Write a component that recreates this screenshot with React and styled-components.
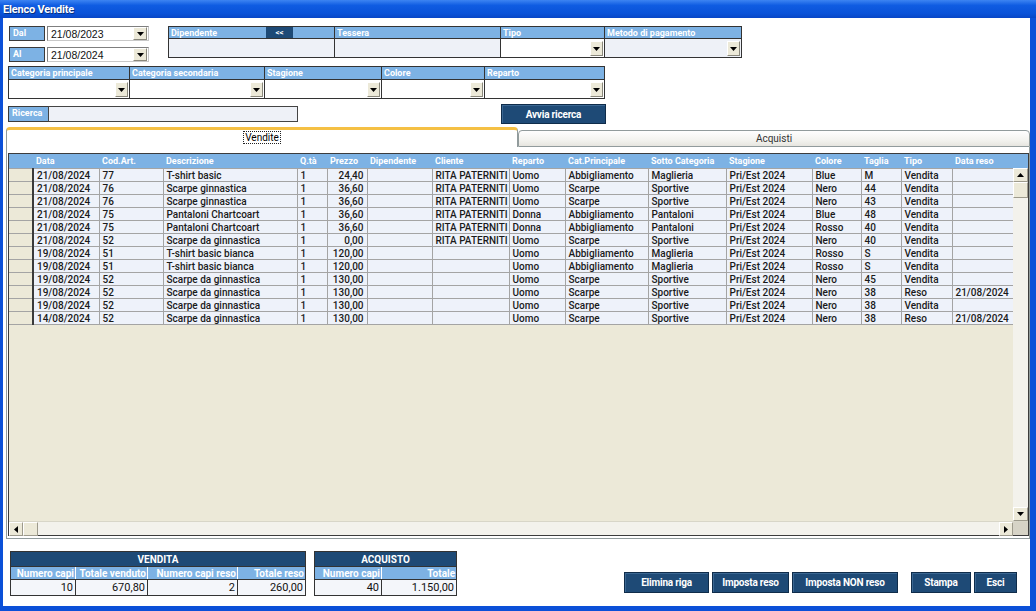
import React from "react"
import styled, { createGlobalStyle } from "styled-components"

const GlobalStyle = createGlobalStyle`
  html, body { margin: 0; padding: 0; background: #fff; }
  body { font-family: Roboto, "Liberation Sans", sans-serif; }
  * { box-sizing: border-box; }
`

const NAVY = "#1e4a76"
const HEAD_BLUE = "#7db2e4"
const BEIGE = "#ece9d8"

const Window = styled.div`
	width: 1036px;
	height: 611px;
	display: flex;
	flex-direction: column;
	background: #0b50d8;
	overflow: hidden;
`
const TitleBar = styled.div`
	height: 18px;
	flex: none;
	display: flex;
	align-items: center;
	padding-left: 3px;
	background: linear-gradient(#3d84f2, #0f5ce2 30%, #0a52d8 75%, #0846c6);
	color: #fff;
	font: bold 11px Roboto, sans-serif;
	letter-spacing: -0.2px;
	text-shadow: 1px 1px 0 #08307e;
`
const Client = styled.div`
	flex: 1;
	margin: 0 6px 5px 3px;
	background: #fff;
	display: flex;
	flex-direction: column;
	padding-top: 8px;
`
const FilterRow = styled.div`
	display: flex;
	align-items: ${({ $align }) => $align || "flex-start"};
	margin-left: ${({ $indent }) => $indent}px;
	margin-top: ${({ $top }) => $top || 0}px;
`
const DateCol = styled.div`
	display: flex;
	flex-direction: column;
	gap: 6px;
	margin-right: 19px;
`
const DateRow = styled.div`
	display: flex;
	gap: 2px;
`
const Label = styled.div`
	width: ${({ $w }) => $w}px;
	height: ${({ $h }) => $h}px;
	background: ${HEAD_BLUE};
	border: 1px solid #3a3a3a;
	color: #fff;
	font: bold 9px Roboto, sans-serif;
	padding: 1px 0 0 3px;
`
const DateInput = styled.div`
	width: 102px;
	height: 15px;
	background: #fff;
	border: 1px solid #7f7f7f;
	border-right-color: #c8c8c8;
	border-bottom-color: #c8c8c8;
	display: flex;
	align-items: center;
	justify-content: space-between;
	padding: 0 1px 0 3px;
	font: 10.5px "Liberation Sans", Arial, sans-serif;
	color: #111;
`
const DropBtn = styled.div`
	width: ${({ $w }) => $w || 13}px;
	height: ${({ $h }) => $h || 12}px;
	background: ${BEIGE};
	border: 1px solid;
	border-color: #fff #8a887c #8a887c #fff;
	display: flex;
	align-items: center;
	justify-content: center;
`
const Groups = styled.div`
	display: flex;
`
const Group = styled.div`
	width: ${({ $w }) => $w}px;
	border: 1px solid #333;
	& + & { margin-left: -1px; }
	display: flex;
	flex-direction: column;
`
const GroupHead = styled.div`
	height: ${({ $h }) => $h}px;
	background: ${HEAD_BLUE};
	border-bottom: 1px solid #333;
	color: #fff;
	font: bold 9px Roboto, sans-serif;
	padding-left: 2px;
	display: flex;
	align-items: center;
	white-space: nowrap;
	overflow: hidden;
`
const HeadLabel = styled.span`
	width: ${({ $w }) => $w}px;
	flex: none;
`
const MiniBtn = styled.div`
	width: 27px;
	height: 100%;
	background: ${NAVY};
	color: #fff;
	font: bold 8px Roboto, sans-serif;
	display: flex;
	align-items: center;
	justify-content: center;
`
const GroupBody = styled.div`
	height: ${({ $h }) => $h}px;
	background: ${({ $light }) => ($light ? "#eef1f7" : "#fff")};
	display: flex;
	align-items: flex-end;
	justify-content: flex-end;
	padding: 1px;
`
const SearchInput = styled.div`
	width: 250px;
	height: 16px;
	margin-left: -1px;
	background: #eef1f7;
	border: 1px solid #444;
`
const NavyButton = styled.button`
	width: ${({ $w }) => $w}px;
	height: ${({ $h }) => $h || 21}px;
	margin-left: ${({ $ml }) => $ml || 0}px;
	margin-right: ${({ $mr }) => $mr || 0}px;
	background: ${NAVY};
	border: 1px solid #0f2c4a;
	box-shadow: inset 1px 1px 0 #3b6792;
	color: #fff;
	font: bold 10px Roboto, sans-serif;
	letter-spacing: -0.2px;
	padding: 0;
	cursor: pointer;
`
const TabStrip = styled.div`
	display: flex;
	align-items: flex-end;
	margin: 3px 0 0 3px;
	height: 20px;
`
const Tab = styled.div`
	height: ${({ $active }) => ($active ? 20 : 17)}px;
	width: ${({ $active }) => ($active ? "512px" : "auto")};
	flex: ${({ $active }) => ($active ? "none" : 1)};
	border: 1px solid #919b9c;
	border-bottom: ${({ $active }) => ($active ? "none" : "1px solid #919b9c")};
	border-top: ${({ $active }) => ($active ? "3px solid #f5c044" : "1px solid #919b9c")};
	border-radius: 4px 4px 0 0;
	background: ${({ $active }) => ($active ? "#fff" : "linear-gradient(#fefefe, #f3f3ef 60%, #e6e5df)")};
	display: flex;
	align-items: center;
	justify-content: center;
	font: 10px Roboto, sans-serif;
	color: ${({ $active }) => ($active ? "#000" : "#333")};
	padding-bottom: ${({ $active }) => ($active ? 3 : 0)}px;
`
const FocusText = styled.span`
	border: 1px dotted #222;
	padding: 0 1px;
	line-height: 11px;
`
const Panel = styled.div`
	height: 392px;
	margin-left: 3px;
	border: 1px solid #919b9c;
	border-top: none;
	padding: 6px 0 2px 1px;
	display: flex;
	flex-direction: column;
`
const GridBox = styled.div`
	flex: 1;
	border: 1px solid #3c3c3c;
	display: flex;
	flex-direction: column;
	background: ${BEIGE};
`
const GridTable = styled.table`
	table-layout: fixed;
	border-collapse: collapse;
	width: ${({ $w }) => $w}px;
`
const HeadCell = styled.th`
	height: 14px;
	line-height: 14px;
	padding: 0 3px;
	background: ${HEAD_BLUE};
	color: #fff;
	font: bold 9px Roboto, sans-serif;
	text-align: left;
	white-space: nowrap;
	overflow: hidden;
`
const Cell = styled.td`
	height: 13px;
	padding: 0 3px;
	background: #eef2fa;
	border: 1px solid #a4a4a4;
	color: #1a1a1a;
	font: 500 10px Roboto, sans-serif;
	line-height: 11px;
	white-space: nowrap;
	overflow: hidden;
	text-align: ${({ $right }) => ($right ? "right" : "left")};
`
const SelCell = styled.td`
	height: 13px;
	padding: 0;
	background: ${BEIGE};
	border: 1px solid #a4a4a4;
	border-left: none;
	border-right: 2px solid #3a3a3a;
`
const GridBody = styled.div`
	flex: 1;
	display: flex;
	min-height: 0;
`
const RowsArea = styled.div`
	flex: 1;
	background: ${BEIGE};
	overflow: hidden;
`
const VScroll = styled.div`
	width: 15px;
	display: flex;
	flex-direction: column;
	background: #f3f2ec;
`
const ScrollTrack = styled.div`
	flex: 1;
`
const ScrollBtn = styled.div`
	width: ${({ $w }) => $w || 15}px;
	height: ${({ $h }) => $h || 14}px;
	flex: none;
	background: ${BEIGE};
	border: 1px solid;
	border-color: #fff #9d9a8c #9d9a8c #fff;
	display: flex;
	align-items: center;
	justify-content: center;
`
const HScroll = styled.div`
	height: 14px;
	display: flex;
	background: #f3f2ec;
	border-top: 1px solid #d8d6c8;
`
const Corner = styled.div`
	width: 15px;
	background: #d6d3c6;
`
const Footer = styled.div`
	flex: 1;
	display: flex;
	align-items: flex-end;
	padding: 0 13px 10px 7px;
`
const Summaries = styled.div`
	display: flex;
	gap: 8px;
`
const SumTable = styled.table`
	border-collapse: collapse;
	table-layout: fixed;
	border: 1px solid #333;
`
const SumTitle = styled.th`
	height: 15px;
	background: ${NAVY};
	color: #fff;
	font: bold 10px Roboto, sans-serif;
	text-align: center;
	padding: 0;
	border-bottom: 1px solid #333;
`
const SumHead = styled.th`
	height: 13px;
	background: ${HEAD_BLUE};
	color: #fff;
	font: bold 10px Roboto, sans-serif;
	text-align: right;
	padding: 0 1px 0 0;
	white-space: nowrap;
	overflow: hidden;
	border-left: 1px solid #fff;
	border-bottom: 1px solid #333;
	&:first-child { border-left: none; }
`
const SumValue = styled.td`
	height: 16px;
	background: #f4f6fa;
	color: #111;
	font: 11px Roboto, sans-serif;
	text-align: right;
	padding: 0 2px 0 0;
	border-left: 1px solid #333;
	&:first-child { border-left: none; }
`
const ActionBar = styled.div`
	margin-left: auto;
	margin-bottom: 3px;
	display: flex;
	gap: 3px;
`

const Tri = ({ dir = "down" }) => {
	const d = {
		down: "M0 0h7L3.5 4z",
		up: "M0 4h7L3.5 0z",
		left: "M4 0v7L0 3.5z",
		right: "M0 0v7l4-3.5z",
	}[dir]
	const horiz = dir === "left" || dir === "right"
	return (
		<svg width={horiz ? 4 : 7} height={horiz ? 7 : 4} viewBox={horiz ? "0 0 4 7" : "0 0 7 4"}>
			<path d={d} fill="#000" />
		</svg>
	)
}

const columns = [
	{ title: "Data", w: 66 },
	{ title: "Cod.Art.", w: 64 },
	{ title: "Descrizione", w: 134 },
	{ title: "Q.tà", w: 30 },
	{ title: "Prezzo", w: 40, right: true },
	{ title: "Dipendente", w: 65 },
	{ title: "Cliente", w: 77 },
	{ title: "Reparto", w: 56 },
	{ title: "Cat.Principale", w: 83 },
	{ title: "Sotto Categoria", w: 78 },
	{ title: "Stagione", w: 86 },
	{ title: "Colore", w: 49 },
	{ title: "Taglia", w: 40 },
	{ title: "Tipo", w: 51 },
	{ title: "Data reso", w: 61 },
]

const rows = [
	["21/08/2024", "77", "T-shirt basic", "1", "24,40", "", "RITA PATERNITI", "Uomo", "Abbigliamento", "Maglieria", "Pri/Est 2024", "Blue", "M", "Vendita", ""],
	["21/08/2024", "76", "Scarpe ginnastica", "1", "36,60", "", "RITA PATERNITI", "Uomo", "Scarpe", "Sportive", "Pri/Est 2024", "Nero", "44", "Vendita", ""],
	["21/08/2024", "76", "Scarpe ginnastica", "1", "36,60", "", "RITA PATERNITI", "Uomo", "Scarpe", "Sportive", "Pri/Est 2024", "Nero", "43", "Vendita", ""],
	["21/08/2024", "75", "Pantaloni Chartcoart", "1", "36,60", "", "RITA PATERNITI", "Donna", "Abbigliamento", "Pantaloni", "Pri/Est 2024", "Blue", "48", "Vendita", ""],
	["21/08/2024", "75", "Pantaloni Chartcoart", "1", "36,60", "", "RITA PATERNITI", "Donna", "Abbigliamento", "Pantaloni", "Pri/Est 2024", "Rosso", "40", "Vendita", ""],
	["21/08/2024", "52", "Scarpe da ginnastica", "1", "0,00", "", "RITA PATERNITI", "Uomo", "Scarpe", "Sportive", "Pri/Est 2024", "Nero", "40", "Vendita", ""],
	["19/08/2024", "51", "T-shirt basic bianca", "1", "120,00", "", "", "Uomo", "Abbigliamento", "Maglieria", "Pri/Est 2024", "Rosso", "S", "Vendita", ""],
	["19/08/2024", "51", "T-shirt basic bianca", "1", "120,00", "", "", "Uomo", "Abbigliamento", "Maglieria", "Pri/Est 2024", "Rosso", "S", "Vendita", ""],
	["19/08/2024", "52", "Scarpe da ginnastica", "1", "130,00", "", "", "Uomo", "Scarpe", "Sportive", "Pri/Est 2024", "Nero", "45", "Vendita", ""],
	["19/08/2024", "52", "Scarpe da ginnastica", "1", "130,00", "", "", "Uomo", "Scarpe", "Sportive", "Pri/Est 2024", "Nero", "38", "Reso", "21/08/2024"],
	["19/08/2024", "52", "Scarpe da ginnastica", "1", "130,00", "", "", "Uomo", "Scarpe", "Sportive", "Pri/Est 2024", "Nero", "38", "Vendita", ""],
	["14/08/2024", "52", "Scarpe da ginnastica", "1", "130,00", "", "", "Uomo", "Scarpe", "Sportive", "Pri/Est 2024", "Nero", "38", "Reso", "21/08/2024"],
]

const topGroups = [
	{ title: "Dipendente", w: 167, light: true, back: true },
	{ title: "Tessera", w: 167, light: true },
	{ title: "Tipo", w: 105, drop: true },
	{ title: "Metodo di pagamento", w: 138, light: true, drop: true },
]
const midGroups = [
	{ title: "Categoria principale", w: 122 },
	{ title: "Categoria secondaria", w: 136 },
	{ title: "Stagione", w: 118 },
	{ title: "Colore", w: 104 },
	{ title: "Reparto", w: 121 },
]

function FieldGroups({ items, headH, bodyH, forceDrop }) {
	return (
		<Groups>
			{items.map((g) => (
				<Group key={g.title} $w={g.w}>
					<GroupHead $h={headH}>
						{g.back ? (
							<>
								<HeadLabel $w={95}>{g.title}</HeadLabel>
								<MiniBtn>&lt;&lt;</MiniBtn>
							</>
						) : (
							g.title
						)}
					</GroupHead>
					<GroupBody $h={bodyH} $light={g.light}>
						{(g.drop || forceDrop) && (
							<DropBtn $w={13} $h={15}>
								<Tri />
							</DropBtn>
						)}
					</GroupBody>
				</Group>
			))}
		</Groups>
	)
}

function DataGrid() {
	const widths = columns.map((c) => c.w)
	return (
		<GridBox>
			<GridTable $w={1019}>
				<colgroup>
					<col style={{ width: 24 }} />
					{widths.map((w, i) => (
						<col key={i} style={{ width: i === widths.length - 1 ? w + 15 : w }} />
					))}
				</colgroup>
				<thead>
					<tr>
						<HeadCell />
						{columns.map((c) => (
							<HeadCell key={c.title}>{c.title}</HeadCell>
						))}
					</tr>
				</thead>
			</GridTable>
			<GridBody>
				<RowsArea>
					<GridTable $w={1004}>
						<colgroup>
							<col style={{ width: 24 }} />
							{widths.map((w, i) => (
								<col key={i} style={{ width: w }} />
							))}
						</colgroup>
						<tbody>
							{rows.map((r, ri) => (
								<tr key={ri}>
									<SelCell />
									{r.map((v, ci) => (
										<Cell key={ci} $right={columns[ci].right}>
											{v}
										</Cell>
									))}
								</tr>
							))}
						</tbody>
					</GridTable>
				</RowsArea>
				<VScroll>
					<ScrollBtn>
						<Tri dir="up" />
					</ScrollBtn>
					<ScrollBtn $h={16} />
					<ScrollTrack />
					<ScrollBtn>
						<Tri dir="down" />
					</ScrollBtn>
				</VScroll>
			</GridBody>
			<HScroll>
				<ScrollBtn $w={14}>
					<Tri dir="left" />
				</ScrollBtn>
				<ScrollBtn $w={15} />
				<ScrollTrack />
				<ScrollBtn $w={14}>
					<Tri dir="right" />
				</ScrollBtn>
				<Corner />
			</HScroll>
		</GridBox>
	)
}

function Summary({ title, cols, values }) {
	return (
		<SumTable style={{ width: cols.reduce((a, c) => a + c.w, 0) }}>
			<colgroup>
				{cols.map((c) => (
					<col key={c.label} style={{ width: c.w }} />
				))}
			</colgroup>
			<thead>
				<tr>
					<SumTitle colSpan={cols.length}>{title}</SumTitle>
				</tr>
				<tr>
					{cols.map((c) => (
						<SumHead key={c.label}>{c.label}</SumHead>
					))}
				</tr>
			</thead>
			<tbody>
				<tr>
					{values.map((v, i) => (
						<SumValue key={i}>{v}</SumValue>
					))}
				</tr>
			</tbody>
		</SumTable>
	)
}

export default function App() {
	return (
		<>
			<GlobalStyle />
			<Window>
				<TitleBar>Elenco Vendite</TitleBar>
				<Client>
					<FilterRow $indent={6}>
						<DateCol>
							<DateRow>
								<Label $w={36} $h={15}>Dal</Label>
								<DateInput>
									21/08/2023
									<DropBtn $w={14} $h={13}>
										<Tri />
									</DropBtn>
								</DateInput>
							</DateRow>
							<DateRow>
								<Label $w={36} $h={15}>Al</Label>
								<DateInput>
									21/08/2024
									<DropBtn $w={14} $h={13}>
										<Tri />
									</DropBtn>
								</DateInput>
							</DateRow>
						</DateCol>
						<FieldGroups items={topGroups} headH={12} bodyH={18} />
					</FilterRow>
					<FilterRow $indent={5} $top={4}>
						<FieldGroups items={midGroups} headH={13} bodyH={18} forceDrop />
					</FilterRow>
					<FilterRow $indent={5} $top={5} $align="center">
						<Label $w={41} $h={16}>Ricerca</Label>
						<SearchInput />
						<NavyButton $w={105} $h={20} $ml={203}>Avvia ricerca</NavyButton>
					</FilterRow>
					<TabStrip>
						<Tab $active>
							<FocusText>Vendite</FocusText>
						</Tab>
						<Tab>Acquisti</Tab>
					</TabStrip>
					<Panel>
						<DataGrid />
					</Panel>
					<Footer>
						<Summaries>
							<Summary
								title="VENDITA"
								cols={[
									{ label: "Numero capi", w: 65 },
									{ label: "Totale venduto", w: 72 },
									{ label: "Numero capi reso", w: 90 },
									{ label: "Totale reso", w: 68 },
								]}
								values={["10", "670,80", "2", "260,00"]}
							/>
							<Summary
								title="ACQUISTO"
								cols={[
									{ label: "Numero capi", w: 67 },
									{ label: "Totale", w: 75 },
								]}
								values={["40", "1.150,00"]}
							/>
						</Summaries>
						<ActionBar>
							<NavyButton $w={85}>Elimina riga</NavyButton>
							<NavyButton $w={77}>Imposta reso</NavyButton>
							<NavyButton $w={106} $mr={10}>Imposta NON reso</NavyButton>
							<NavyButton $w={60}>Stampa</NavyButton>
							<NavyButton $w={43}>Esci</NavyButton>
						</ActionBar>
					</Footer>
				</Client>
			</Window>
		</>
	)
}
